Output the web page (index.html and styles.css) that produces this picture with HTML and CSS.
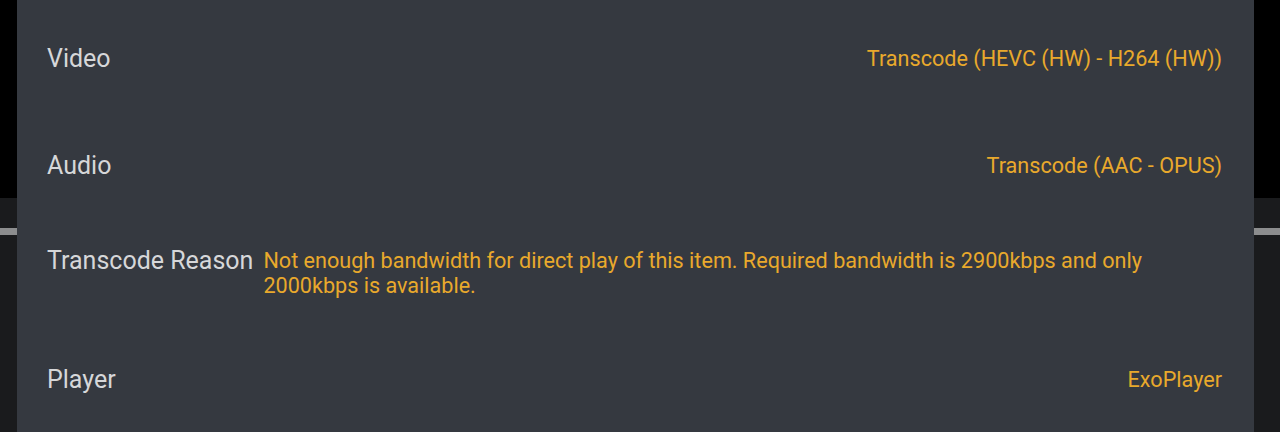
FILE: index.html
```html
<!DOCTYPE html>
<html lang="en">
<head>
    <meta charset="UTF-8">
    <meta name="viewport" content="width=device-width, initial-scale=1.0">
    <title>Playback Info</title>

    <link rel="stylesheet" href="styles.css">
</head>
<body>
    <div class="backdrop">
        <div class="backdrop-top"></div>
        <div class="backdrop-bar"></div>
        <div class="backdrop-rule"></div>
        <div class="backdrop-rest"></div>
    </div>

    <div class="info-panel">
        <div class="info-row">
            <div class="info-line">
                <div class="info-label">Video</div>
                <div class="info-value">Transcode (HEVC (HW) - H264 (HW))</div>
            </div>
        </div>
        <div class="info-row">
            <div class="info-line">
                <div class="info-label">Audio</div>
                <div class="info-value">Transcode (AAC - OPUS)</div>
            </div>
        </div>
        <div class="info-row">
            <div class="info-line">
                <div class="info-label">Transcode Reason</div>
                <div class="info-value">Not enough bandwidth for direct play of this item. Required bandwidth is 2900kbps and only 2000kbps is available.</div>
            </div>
        </div>
        <div class="info-row">
            <div class="info-line">
                <div class="info-label">Player</div>
                <div class="info-value">ExoPlayer</div>
            </div>
        </div>
    </div>
</body>
</html>
```

FILE: styles.css
```css
body {
    margin: 0;
    height: 432px;
    overflow: hidden;
    font-family: Roboto, "Liberation Sans", sans-serif;
    background-color: #000;
    position: relative;
}

.backdrop {
    display: flex;
    flex-direction: column;
    height: 432px;
}

.backdrop-top {
    height: 198px;
    background: #000;
}

.backdrop-bar {
    height: 30px;
    background: #1a1b1d;
}

.backdrop-rule {
    height: 7px;
    background: #8c8d8e;
}

.backdrop-rest {
    flex: 1;
    background: #1a1b1d;
}

.info-panel {
    position: absolute;
    top: 0;
    left: 17px;
    width: 1237px;
    height: 432px;
    box-sizing: border-box;
    padding: 5px 32px 0 30px;
    background: #353940;
}

.info-row {
    display: flex;
    align-items: center;
    min-height: 107px;
}

.info-line {
    display: flex;
    align-items: flex-start;
    width: 100%;
    gap: 10px;
}

.info-label {
    flex-shrink: 0;
    font-size: 25px;
    line-height: 25px;
    color: #d6d7d9;
}

.info-value {
    margin-left: auto;
    font-size: 21.6px;
    line-height: 25px;
    color: #e9a92c;
}
```
